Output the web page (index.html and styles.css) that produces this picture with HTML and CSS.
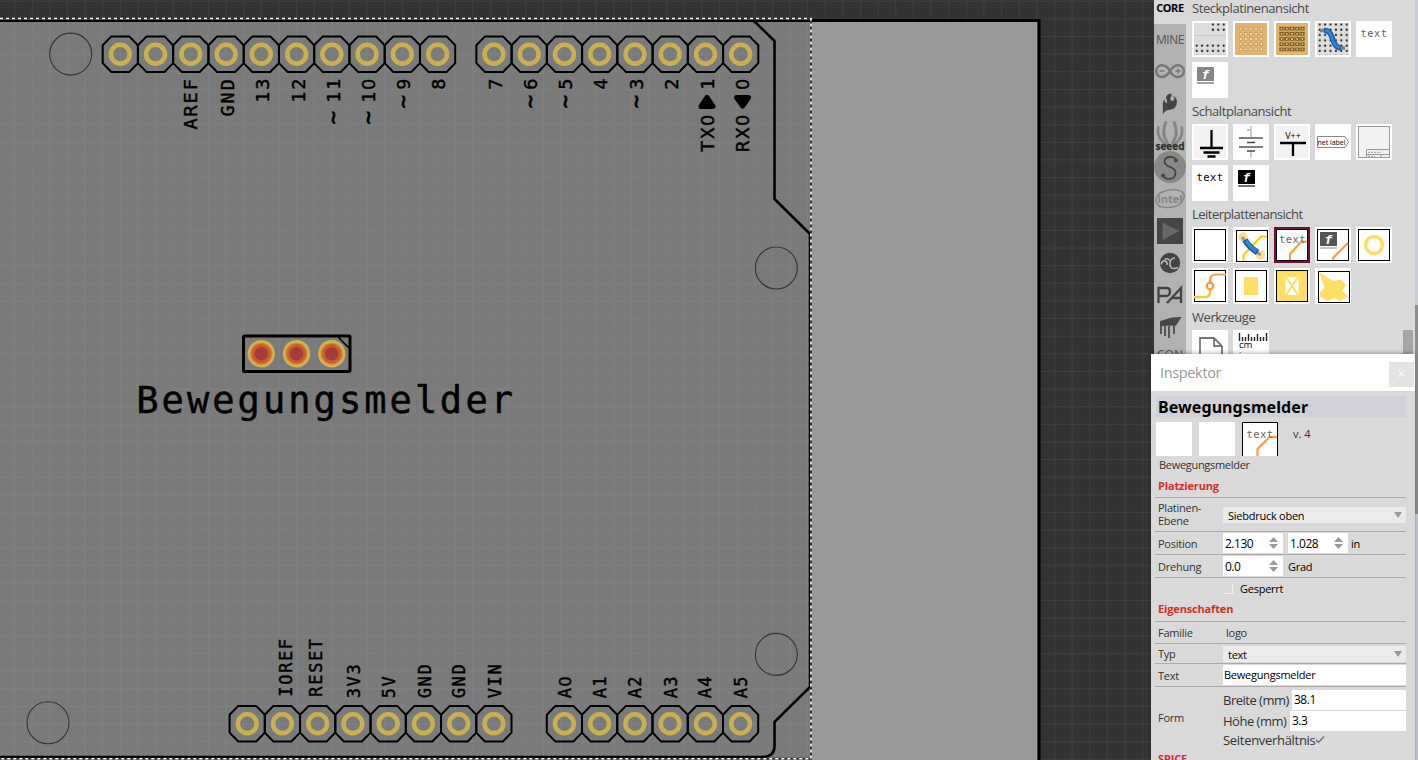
FILE: index.html
```html
<!DOCTYPE html>
<html lang="de">
<head>
<meta charset="utf-8">
<title>Leiterplatte</title>
<link rel="stylesheet" href="styles.css">
</head>
<body>
<main class="app">
<svg class="canvas" width="1154" height="760" viewBox="0 0 1154 760">
  <defs>
    <pattern id="grid" x="14.05" y="0.8" width="17.625" height="17.625" patternUnits="userSpaceOnUse">
      <path class="grid-line" d="M0 .5H17.625M.5 0V17.625"/>
    </pattern>
    <g id="pin">
      <path class="silk" d="M-9-17.8H9L17.6-9V9L9 17.8H-9L-17.6 9V-9Z"/>
      <circle class="ring" r="9.4"/>
    </g>
    <g id="pad"><circle r="13.7" fill="#cfb252"/><circle r="11" fill="#d08436"/><circle r="9.6" fill="#cb5b2b"/><circle r="6.7" fill="#a63c3a"/></g>
  </defs>
  <rect width="1154" height="760" fill="#333"/>
  <rect x="-5" y="20" width="1044" height="760" fill="#999"/>
  <rect x="-5" y="20" width="816" height="738" fill="#7a7a7a"/>
  <rect width="1154" height="760" fill="url(#grid)"/>
  <path d="M811 20.5H1039V760" fill="none" stroke="#000" stroke-width="3.2"/>
  <path d="M0 21H811" stroke="#000" stroke-width="2"/>
  <path class="outline" d="M0 757H764Q774.5 756 774.5 746V722L810 687V234L774.5 199V41L754 21"/>
  <path class="sel-dark" d="M0 18.5H811V758.8H0"/>
  <path class="sel-dash" d="M0 18.5H811V758.8H0"/>
  <g class="hole"><circle cx="70.7" cy="54.1" r="21"/><circle cx="776.3" cy="268" r="21"/><circle cx="776.3" cy="654.4" r="21"/><circle cx="48" cy="722.7" r="21"/></g>
  <g>
    <use href="#pin" x="120.3" y="54.2"/><use href="#pin" x="155.5" y="54.2"/><use href="#pin" x="190.8" y="54.2"/><use href="#pin" x="226.1" y="54.2"/><use href="#pin" x="261.3" y="54.2"/><use href="#pin" x="296.6" y="54.2"/><use href="#pin" x="331.8" y="54.2"/><use href="#pin" x="367.1" y="54.2"/><use href="#pin" x="402.3" y="54.2"/><use href="#pin" x="437.6" y="54.2"/>
    <use href="#pin" x="494" y="54.2"/><use href="#pin" x="529.2" y="54.2"/><use href="#pin" x="564.5" y="54.2"/><use href="#pin" x="599.7" y="54.2"/><use href="#pin" x="635" y="54.2"/><use href="#pin" x="670.2" y="54.2"/><use href="#pin" x="705.5" y="54.2"/><use href="#pin" x="740.7" y="54.2"/>
    <use href="#pin" x="247.2" y="723.7"/><use href="#pin" x="282.4" y="723.7"/><use href="#pin" x="317.7" y="723.7"/><use href="#pin" x="352.9" y="723.7"/><use href="#pin" x="388.2" y="723.7"/><use href="#pin" x="423.4" y="723.7"/><use href="#pin" x="458.7" y="723.7"/><use href="#pin" x="493.9" y="723.7"/>
    <use href="#pin" x="564.4" y="723.7"/><use href="#pin" x="599.6" y="723.7"/><use href="#pin" x="634.9" y="723.7"/><use href="#pin" x="670.1" y="723.7"/><use href="#pin" x="705.4" y="723.7"/><use href="#pin" x="740.6" y="723.7"/>
  </g>
  <g class="label" transform="rotate(-90)">
    <text x="-124 -111 -98 -84.7" y="197">AREF</text>
    <text x="-111 -98 -84.7" y="234">GND</text>
    <text x="-97.3 -84.3" y="269">13</text>
    <text x="-97.3 -84.3" y="304.5">12</text>
    <text x="-117.5 -97.3 -84.3" y="339.5"><tspan class="tilde">~</tspan>11</text>
    <text x="-117.5 -97.3 -84.3" y="374.6"><tspan class="tilde">~</tspan>1<tspan class="zero">0</tspan></text>
    <text x="-101.7 -84.3" y="409.8"><tspan class="tilde">~</tspan>9</text>
    <text x="-84.3" y="445">8</text>
    <text x="-84.3" y="501.5">7</text>
    <text x="-101.7 -84.3" y="536.6"><tspan class="tilde">~</tspan>6</text>
    <text x="-101.7 -84.3" y="572"><tspan class="tilde">~</tspan>5</text>
    <text x="-84.3" y="607">4</text>
    <text x="-101.7 -84.3" y="643"><tspan class="tilde">~</tspan>3</text>
    <text x="-84.3" y="678">2</text>
    <text x="-146.5 -133.3 -120.3" y="714">TX<tspan class="zero">0</tspan></text>
    <text x="-84.3" y="714">1</text>
    <text x="-146.5 -133.3 -120.3" y="749">RX<tspan class="zero">0</tspan></text>
    <text x="-84.3" y="749" class="zero">0</text>
  </g>
  <path class="arrow" d="M707 97.500L713 106.500H701Z"/>
  <path class="arrow" d="M742.600 106L748.500 97.500H736.500Z"/>
  <g class="label small" transform="rotate(-90)">
    <text x="-691.6 -679.7 -667.6 -655.8 -644.2" y="291.8">IOREF</text>
    <text x="-691.6 -679.7 -667.6 -655.8 -644.2" y="321.6">RESET</text>
    <text x="-693 -681.3 -669.3" y="360.2">3V3</text>
    <text x="-693 -681.3" y="395.2">5V</text>
    <text x="-693 -681.3 -669.3" y="430.6">GND</text>
    <text x="-693 -681.3 -669.3" y="465">GND</text>
    <text x="-693 -681.3 -669.3" y="501">VIN</text>
    <text x="-693 -681.5" y="571">A<tspan class="zero">0</tspan></text>
    <text x="-693 -681.5" y="606">A1</text>
    <text x="-693 -681.5" y="641">A2</text>
    <text x="-693 -681.5" y="676.5">A3</text>
    <text x="-693 -681.5" y="711.3">A4</text>
    <text x="-693 -681.5" y="747">A5</text>
  </g>
  <rect x="243.5" y="336" width="106.5" height="35.6" rx="1" fill="none" stroke="#000" stroke-width="3"/>
  <path d="M338.5 337.5L349 348" stroke="#000" stroke-width="1.6"/>
  <use href="#pad" x="261.3" y="353.7"/><use href="#pad" x="296.5" y="353.7"/><use href="#pad" x="331.7" y="353.7"/>
  <text class="title" x="147.5 172.7 198.1 223.4 248.7 274.1 299.4 324.7 350.1 375.4 400.7 426.1 450.8 476.7 502" y="412.5">Bewegungsmelder</text>
</svg>

<aside class="parts">
  <nav class="tabs">
    <div class="tab core">CORE</div>
    <div class="tab mine">MINE</div>
    <svg class="logos" width="32" height="304" viewBox="1154 56 32 304">
      <g fill="none" stroke="#777" stroke-width="2.4"><path d="M1170 71C1167 66 1164.500 65.300 1162 65.300A5.800 5.800 0 0 0 1162 77C1165.500 77 1167.500 75 1170 71C1172.500 67 1174.500 65.300 1178 65.300A5.800 5.800 0 0 1 1178 77C1175 77 1172.500 76 1170 71"/><path d="M1159.500 71h5M1175.500 71h5M1178 68.500v5" stroke-width="1.500"/></g>
      <path fill="#444" d="M1171.500 93.500Q1165.500 94 1166 98.500Q1168 101 1166.500 103Q1164.500 103 1164.800 99.500Q1162.500 101 1162.800 105V114.500Q1165.500 110 1168.500 110Q1177 109.500 1177 101.500Q1176.500 97 1173 96Q1176 100 1172.500 101Q1169.500 100.500 1170.500 97.500Q1172 96 1171.500 93.500Z"/>
      <g fill="none" stroke="#858585" stroke-width="2.600"><path d="M1158.500 126.500Q1155.500 138 1168 146M1181.500 126.500Q1184.500 138 1172 146"/><path d="M1166 121.500Q1160.500 134 1168 144M1174 121.500Q1179.500 134 1172 144" stroke-width="3"/></g>
      <text x="1170" y="149.500" class="seeed">seeed</text>
      <circle cx="1170" cy="167" r="16" fill="#888"/>
      <path d="M1176.500 161C1174 155 1164 156 1164.500 162C1165 168 1176 166 1175.500 173C1175 180 1166 180.500 1163 176" fill="none" stroke="#444" stroke-width="1.800"/><circle cx="1176" cy="160.500" r="1.900" fill="#444"/><circle cx="1163" cy="175.500" r="1.900" fill="#444"/>
      <path d="M1181 191q5 3 2 9q-3 7-15 7.500q-11 .5-12-6q-.5-8 9-10.500q10-3 15 0" fill="none" stroke="#858585" stroke-width="1.500"/>
      <text x="1170" y="203" class="intel">intel</text>
      <rect x="1157" y="218" width="26" height="26" fill="#454545"/><path d="M1162.500 222.500V240L1179.500 231Z" fill="#666"/>
      <circle cx="1170" cy="263" r="10.200" fill="#444"/><path d="M1161 264.500q1.500-4.500 4-3.500q2.500.5 2 4M1178 267.500q-8 3-8-3.500q0-6 5-6M1164.500 259.500q3-2 5 1" fill="none" stroke="#bbb" stroke-width="1.500"/>
      <path d="M1158.500 303V288H1167Q1170 288 1170 291.500T1167 296H1158.500M1167 303L1181 288V303M1172 298H1181" fill="none" stroke="#454545" stroke-width="2.300"/>
      <path d="M1160 321L1172 317.500L1181.500 317L1176 325.500L1160 326Z" fill="#454545"/><path d="M1161 325V334M1165 326V336M1169 326V338M1174 325V334" stroke="#454545" stroke-width="1.700"/>
      <text x="1170" y="359" class="con">CON</text>
    </svg>
  </nav>
  <div class="bin">
    <h2 class="h-bread">Steckplatinenansicht</h2>
    <div class="tiles">
      <svg viewBox="0 0 36 36"><defs><pattern id="holes" x="2" y="1" width="5.4" height="5.3" patternUnits="userSpaceOnUse"><circle cx="2.700" cy="2.500" r="1.100" fill="#222"/></pattern></defs><rect x="2" y="2" width="32" height="32" fill="#ddd"/><path d="M2 14.500h32" stroke="#ccc"/><rect x="18.200" y="1" width="16" height="10" fill="url(#holes)"/><rect x="2" y="23" width="32" height="11" fill="url(#holes)"/></svg>
      <svg viewBox="0 0 36 36"><defs><pattern id="perf" x="5" y="5" width="5.2" height="5.2" patternUnits="userSpaceOnUse"><circle cx="2.600" cy="2.600" r="1.400" fill="#fff" stroke="#c79b58"/></pattern></defs><rect x="2" y="2" width="32" height="32" fill="#dfb56f"/><rect x="5" y="5" width="26" height="26" fill="url(#perf)"/></svg>
      <svg viewBox="0 0 36 36"><defs><pattern id="strip" x="5" y="5" width="5.2" height="5.2" patternUnits="userSpaceOnUse"><rect y=".6" width="5.200" height="4" fill="#a97c31"/><circle cx="2.600" cy="2.600" r="1.300" fill="#fff" stroke="#65450d"/></pattern></defs><rect x="2" y="2" width="32" height="32" fill="#dfb56f"/><rect x="5" y="5" width="26" height="26" fill="url(#strip)"/></svg>
      <svg viewBox="0 0 36 36"><rect x="2" y="2" width="32" height="32" fill="#ddd"/><rect x="2" y="2" width="32" height="32" fill="url(#holes)"/><path d="M5 9.500h5M25 27h5" stroke="#8d8060" stroke-width="3.500"/><path d="M9 9.500C20 9 15 26 26 27" fill="none" stroke="#1c5aa8" stroke-width="5.500"/><path d="M10 9.500C19 9 15 26 25.500 26.500" fill="none" stroke="#3580d0" stroke-width="3"/></svg>
      <svg viewBox="0 0 36 36"><text x="18" y="16" class="mono grey">text</text></svg>
      <svg viewBox="0 0 36 36"><rect x="5" y="5" width="17" height="14" fill="#858585"/><path d="M5 21h17" stroke="#858585" stroke-width="1.500"/><text x="13.500" y="17" class="fritz">f</text></svg>
    </div>
    <h2>Schaltplanansicht</h2>
    <div class="tiles">
      <svg viewBox="0 0 36 36"><rect x="2" y="2" width="32" height="32" fill="#f2f2f2"/><path d="M19.500 6V24M8 24H31M11.500 28.500H27.500M15.500 32.500H23.500" stroke="#000" stroke-width="2.300"/></svg>
      <svg viewBox="0 0 36 36"><path d="M18 2V13M18 27V34" stroke="#999"/><path d="M6 14H30M6 23H30" stroke="#555" stroke-width="1.400"/><path d="M14 18.500H22M14 27H22" stroke="#444" stroke-width="1.400"/><path d="M14 6h3" stroke="#e66"/></svg>
      <svg viewBox="0 0 36 36"><rect x="2" y="2" width="32" height="32" fill="#f2f2f2"/><text x="19" y="15" class="vpp">V++</text><path d="M6 19H32M19 19V32" stroke="#000" stroke-width="2.300"/></svg>
      <svg viewBox="0 0 36 36"><path d="M2.500 12.500H30L33.500 18L30 23.500H2.500Z" fill="#fff" stroke="#888"/><text x="16.500" y="20.800" class="net" textLength="28" lengthAdjust="spacingAndGlyphs">net label</text></svg>
      <svg viewBox="0 0 36 36"><rect x="2.500" y="2.500" width="31" height="31" fill="#f2f2f2" stroke="#999"/><path d="M10.500 25.500H33M10.500 25.500V33M10 30.500H33M25 30V33" fill="none" stroke="#999"/><path d="M12 28.300h13M12 32.300h7" stroke="#999" stroke-dasharray="2 1"/></svg>
      <svg viewBox="0 0 36 36"><text x="18" y="16" class="mono">text</text></svg>
      <svg viewBox="0 0 36 36"><rect x="5" y="5" width="17" height="14"/><path d="M5 21h17" stroke="#444" stroke-width="1.500"/><text x="13.500" y="17" class="fritz">f</text></svg>
    </div>
    <h2 class="h-pcb">Leiterplattenansicht</h2>
    <div class="tiles">
      <svg viewBox="0 0 36 36"><rect class="frame" x="2.5" y="2.5" width="31" height="31"/></svg>
      <svg viewBox="0 0 36 36"><rect class="frame" x="3.5" y="3.5" width="31" height="31"/><path d="M10.500 34V28L28 9.500H34" fill="none" stroke="#f9cf00" stroke-width="2"/><circle cx="10" cy="10" r="4.700" fill="#fae08b"/><circle cx="27.500" cy="28" r="4.700" fill="#fae08b"/><path d="M9 10L13 15M23 24L27.500 28" stroke="#999" stroke-width="3"/><path d="M12 13Q16 20 24.500 25.500" fill="none" stroke="#1c5aa8" stroke-width="6"/><path d="M13 14Q17 20 23.500 24.500" fill="none" stroke="#3583d4" stroke-width="3.500"/></svg>
      <svg viewBox="0 0 36 36"><rect x="1" y="1" width="34" height="34" fill="#fff" stroke="#780d34" stroke-width="2"/><rect class="frame" x="2.5" y="2.5" width="31" height="31"/><path d="M16 33V27L27.500 14.500H33" class="trace"/><text x="18.500" y="16" class="mono grey">text</text></svg>
      <svg viewBox="0 0 36 36"><rect class="frame" x="2.5" y="2.5" width="31" height="31"/><rect x="5" y="5" width="17" height="14" fill="#555"/><path d="M5 21h17" stroke="#888"/><text x="13.500" y="17" class="fritz">f</text><path d="M18 33V31L33 16" class="trace"/></svg>
      <svg viewBox="0 0 36 36"><rect class="frame" x="2.5" y="2.5" width="31" height="31"/><circle cx="18" cy="18" r="8.500" fill="none" stroke="#ffde66" stroke-width="3.600"/></svg>
      <svg viewBox="0 0 36 36"><rect class="frame" x="2.5" y="2.5" width="31" height="31"/><path d="M2 29H13Q18 29 18 24V22" fill="none" stroke="#e5d044" stroke-width="2.600"/><path d="M18 15V12Q18 6.500 24 6.500H34" class="trace"/><circle cx="18" cy="18" r="3.300" fill="#fff" stroke="#fa963e" stroke-width="2.200"/></svg>
      <svg viewBox="0 0 36 36"><rect class="frame" x="2.5" y="2.5" width="31" height="31"/><rect x="11" y="9" width="14" height="18" fill="#ffde66"/></svg>
      <svg viewBox="0 0 36 36"><rect class="frame fill" x="2.5" y="2.5" width="31" height="31"/><rect x="11.500" y="9" width="13" height="18" fill="#fff"/><path d="M12 9L24 27M24 9L12 27" stroke="#ffde66" stroke-width="2"/></svg>
      <svg viewBox="0 0 36 36"><rect class="frame" x="3.5" y="3.5" width="31" height="31"/><path d="M4 4L18 13L26 11.500L31 16.500L27.500 23L33 28L25 33L19.500 30L13 33L5 28.500V24L9.500 19.500Z" fill="#ffde66"/></svg>
    </div>
    <h2>Werkzeuge</h2>
    <div class="tiles">
      <svg viewBox="0 0 36 36"><path d="M8 36V8H22L30 16V36M22 8V16H30" fill="none" stroke="#777" stroke-width="1.800"/></svg>
      <svg viewBox="0 0 36 36"><path d="M6.500 3V11M9.500 7V11M12.500 7V11M15.500 4V11M18.500 7V11M21.500 7V11M24.500 4V11M27.500 7V11M30.500 7V11M33.500 3V11" stroke="#222" stroke-width="1.400"/><text x="6" y="18" class="cm">cm</text><text x="6" y="29" class="cm">in</text></svg>
    </div>
  </div>
  <div class="rail"><i></i></div>
</aside>

<section class="inspector">
  <header><span>Inspektor</span><div class="close">×</div></header>
  <div class="name">Bewegungsmelder</div>
  <div class="views">
    <i></i><i></i>
    <svg width="36" height="34" viewBox="0 0 36 34"><path d="M.5 34V.5H35.500V34" fill="#fff" stroke="#000"/><path d="M15.500 34V27L27.500 15H35" class="trace"/><text x="18" y="16" class="mono grey">text</text></svg>
    <span>v. 4</span>
  </div>
  <div class="desc">Bewegungsmelder</div>
  <h3 class="h-place">Platzierung</h3>
  <div class="row r-layer"><label>Platinen-<br>Ebene</label><div class="select"><span>Siebdruck oben</span><b></b></div></div>
  <div class="row r-pos"><label>Position</label><div class="spin">2.130<b></b></div><div class="spin second">1.028<b></b></div><em>in</em></div>
  <div class="row r-rot"><label>Drehung</label><div class="spin">0.0<b></b></div><em class="deg">Grad</em></div>
  <div class="row r-lock"><label></label><i class="check"></i><em>Gesperrt</em></div>
  <h3 class="h-prop">Eigenschaften</h3>
  <div class="row r-fam"><label>Familie</label><span class="logo">logo</span></div>
  <div class="row r-type"><label>Typ</label><div class="select"><span>text</span><b></b></div></div>
  <div class="row r-text"><label>Text</label><div class="input">Bewegungsmelder</div></div>
  <div class="row r-form"><label>Form</label>
    <div class="form">
      <div class="dim"><span>Breite (mm)</span><div class="input">38.1</div></div>
      <div class="dim high"><span>Höhe (mm)</span><div class="input">3.3</div></div>
      <div class="ratio"><span>Seitenverhältnis</span><svg width="10" height="10" viewBox="0 0 10 10"><path d="M1 5L3.500 7.500L9 1.500" fill="none" stroke="#666" stroke-width="1.200"/></svg></div>
    </div>
  </div>
  <h3 class="h-spice">SPICE</h3>
</section>
</main>
</body>
</html>
```
FILE: styles.css
```css
* { box-sizing: border-box; }
body { margin: 0; overflow: hidden; font-family: "Open Sans", "Noto Sans", sans-serif; }
.app { position: relative; display: flex; width: 1418px; height: 760px; overflow: hidden; background: #333; }
.canvas { display: block; flex: none; }
.grid-line { fill: none; stroke: #aaccec; stroke-opacity: .085; stroke-width: 1; }
.silk { fill: none; stroke: #000; stroke-width: 2; }
.ring { fill: none; stroke: #c9af50; stroke-width: 4.6; }
.outline { fill: none; stroke: #000; stroke-width: 2.6; stroke-linejoin: round; }
.sel-dark { fill: none; stroke: #333; stroke-width: 2; }
.sel-dash { fill: none; stroke: #fff; stroke-width: 1.6; stroke-dasharray: 3 3; }
.hole { fill: none; stroke: #333; stroke-width: 1.1; }
.label { font: 18.5px "DejaVu Sans Mono", monospace; text-anchor: middle; stroke: #000; stroke-width: .45; }
.small { font-size: 17px; }
.zero { font-family: "Liberation Sans", sans-serif; }
.tilde { font-size: 22px; stroke-width: .8; }
.arrow { stroke: #000; stroke-width: 5; stroke-linejoin: round; }
.title { font: 37px "DejaVu Sans Mono", monospace; text-anchor: middle; stroke: #000; stroke-width: .5; stroke-linejoin: round; }

.parts { display: flex; width: 264px; height: 760px; background: #d9d9d9; }
.tabs { width: 32px; background: #b2b2b2; text-align: center; }
.tab { white-space: nowrap; line-height: 16px; }
.core { height: 24px; background: #d9d9d9; font: bold 11px/16px "Noto Sans", sans-serif; color: #000; letter-spacing: -.3px; }
.mine { height: 32px; font-size: 12px; line-height: 32px; color: #555; letter-spacing: -.5px; }
.logos { display: block; }
.seeed { font: bold 10px "Open Sans", sans-serif; text-anchor: middle; fill: #333; stroke: #333; stroke-width: .3; }
.intel { font: bold 11px "Open Sans", sans-serif; text-anchor: middle; fill: #858585; }
.con { font: 12px "Open Sans", sans-serif; text-anchor: middle; fill: #555; }
.bin { width: 229px; padding-left: 6px; }
.bin h2 { margin: 0; height: 21px; font-size: 13px; font-weight: 400; line-height: 17px; color: #484848; white-space: nowrap; letter-spacing: -.42px; }
.bin .h-pcb { letter-spacing: -.53px; }
.tiles { display: flex; flex-wrap: wrap; gap: 5px; padding-bottom: 5px; }
.tiles svg { width: 36px; height: 36px; background: #fff; }
.rail { position: relative; width: 3px; background: linear-gradient(#c3cdd2 0 305px, #8e8e8e 305px 514px, #c3cdd2 514px); }
.rail i { position: absolute; right: 5px; top: 330px; width: 10px; height: 30px; background: #a6a6a6; }
.mono { font: 10.5px "DejaVu Sans Mono", monospace; text-anchor: middle; letter-spacing: .4px; }
.grey { fill: #666; }
.fritz { font: italic bold 13px "DejaVu Sans Mono", monospace; text-anchor: middle; fill: #fff; }
.vpp { font: 9px "Open Sans", sans-serif; text-anchor: middle; }
.net { font: 8px "Open Sans", sans-serif; text-anchor: middle; }
.cm { font: 9.5px "Open Sans", sans-serif; }
.frame { fill: #fff; stroke: #000; }
.frame.fill { fill: #ffde66; }
.trace { fill: none; stroke: #fe9b43; stroke-width: 2.2; }

.inspector { position: absolute; left: 1151px; top: 354px; width: 264px; height: 420px; background: #d9d9d9; font-size: 11px; letter-spacing: -.25px; color: #333; box-shadow: 0 -1px 4px rgba(0,0,0,.3); }
.inspector header { display: flex; justify-content: space-between; height: 37px; padding: 8px 1px 0 9px; background: #fff; color: #999; font-size: 14.5px; line-height: 22px; letter-spacing: -.35px; }
.close { width: 25px; height: 25px; background: #e4e4e4; color: #fff; text-align: center; line-height: 24px; }
.name { margin: 5px 0 0 5px; width: 250px; height: 21px; padding-left: 2px; background: #d0d0d8; color: #000; font: bold 16px/22px "Noto Sans", sans-serif; letter-spacing: .08px; }
.views { display: flex; height: 34px; margin: 5px 0 0 5px; gap: 7px; }
.views i { width: 36px; height: 34px; background: #fff; }
.views span { margin-left: 8px; line-height: 24px; letter-spacing: 0; }
.desc { padding-left: 8px; height: 19px; line-height: 18px; letter-spacing: -.3px; }
.inspector h3 { margin: 0; padding-left: 7px; font-size: 11px; letter-spacing: -.15px; color: #d42f27; }
.h-place { height: 22px; line-height: 22px; }
.row { display: flex; align-items: center; margin-left: 4px; width: 251px; border-top: 1px solid #aaa; white-space: nowrap; }
.row > label { width: 68px; flex: none; padding-left: 3px; line-height: 13px; }
.row em { font-style: normal; color: #000; }
.r-layer { height: 34px; }
.r-layer > label { padding-bottom: 2px; }
.select { display: flex; align-items: center; justify-content: space-between; width: 183px; height: 16px; padding: 0 4px 0 5px; background: #ebebeb; color: #000; }
.select span { height: 11px; line-height: 13px; overflow: hidden; }
.select b { border: 4px solid transparent; border-top: 6px solid #999; border-bottom: 0; }
.r-pos { height: 23px; }
.spin { display: flex; align-items: center; justify-content: space-between; width: 60px; height: 20px; padding: 0 5px 0 2px; background: #fff; color: #000; font-size: 12px; letter-spacing: -.5px; }
.spin b { width: 9px; height: 12px; background: #999; clip-path: polygon(50% 0,100% 42%,0 42%,0 58%,100% 58%,50% 100%,0 58%,0 42%); }
.second { margin: 0 3px 0 5px; }
.r-rot { height: 23px; }
.deg { margin-left: 5px; }
.r-lock { height: 22px; }
.check { width: 10px; height: 10px; margin-right: 7px; border: solid #eee; border-width: 0 1px 1px 0; }
.h-prop { height: 22px; line-height: 20px; }
.r-fam { height: 22px; }
.logo { padding-left: 3px; }
.r-type { height: 20px; }
.r-text { height: 23px; }
.input { flex: 1; height: 20px; padding-left: 1px; background: #fff; color: #000; line-height: 20px; }
.r-form { height: 64px; padding-top: 1px; }
.r-form > label { padding-bottom: 3px; }
.form { width: 183px; font-size: 13px; letter-spacing: -.3px; }
.dim { display: flex; height: 21px; line-height: 20px; letter-spacing: -.5px; }
.dim span { width: 69px; }
.dim .input { font-size: 12px; padding-left: 2px; }
.dim.high span { width: 67px; }
.ratio { display: flex; align-items: center; height: 16px; line-height: 15px; }
.h-spice { line-height: 18px; }
```
